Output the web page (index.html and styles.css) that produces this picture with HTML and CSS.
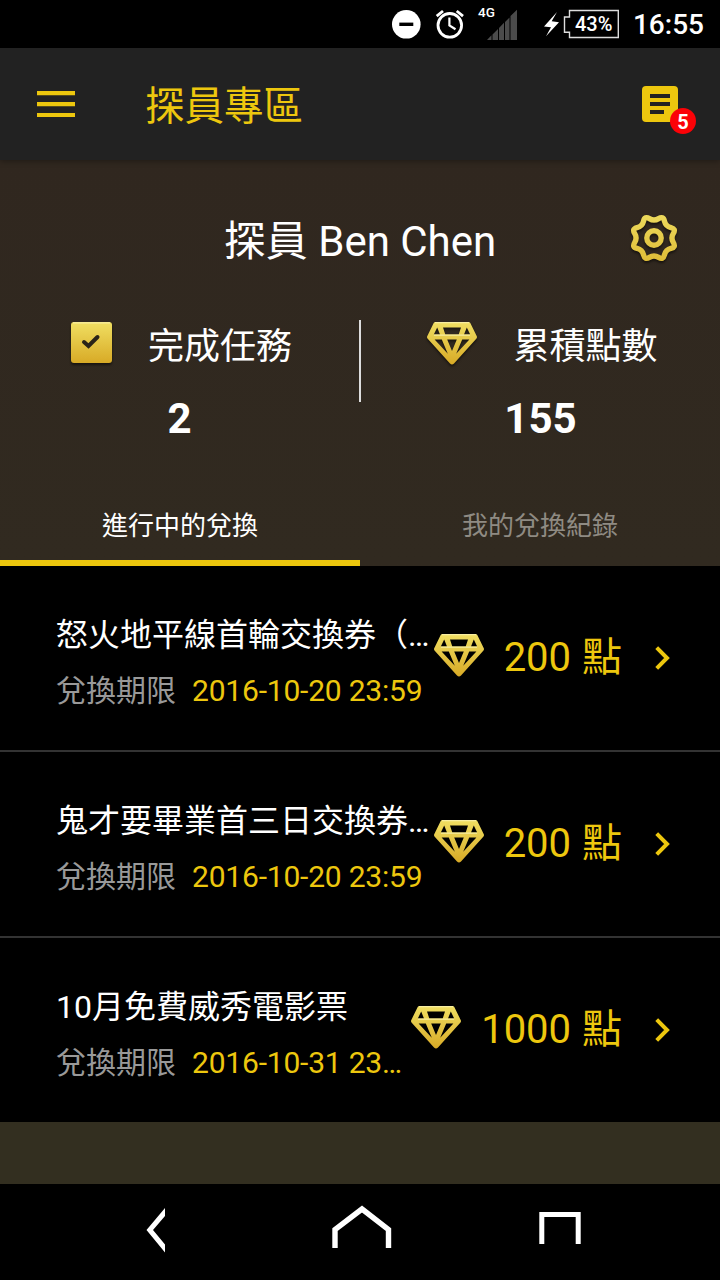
FILE: index.html
```html
<!DOCTYPE html>
<html lang="zh-Hant">
<head>
<meta charset="utf-8">
<title>探員專區</title>
<link rel="stylesheet" href="styles.css">
</head>
<body>
<svg class="defs" width="0" height="0" aria-hidden="true">
  <defs>
    <linearGradient id="gold" x1="0" y1="0" x2="0" y2="1">
      <stop offset="0" stop-color="#f0df62"/>
      <stop offset="1" stop-color="#d8aa26"/>
    </linearGradient>
    <linearGradient id="gear-gold" gradientUnits="userSpaceOnUse" x1="0" y1="-23" x2="0" y2="23">
      <stop offset="0" stop-color="#ecd95c"/>
      <stop offset="1" stop-color="#dfbd38"/>
    </linearGradient>
    <symbol id="gem" viewBox="0 0 50 43">
      <path fill="url(#gold)" fill-rule="evenodd" d="M8.4 0H41.6Q42.8 0 43.3 1L49.8 14.2Q50.3 15.4 49.5 16.5L27 41.6Q25 43.6 23 41.6L.5 16.5Q-.3 15.4 .2 14.2L6.7 1Q7.2 0 8.4 0ZM16 5.5L18.3 12.5H31.7L34 5.5ZM10.2 5.5L6.8 12.5H13ZM39.8 5.5L43.2 12.5H37ZM20.2 17.6L25 29L29.8 17.6ZM7.6 17.6L20.8 31.8L14.8 17.6ZM42.4 17.6L29.2 31.8L35.2 17.6Z"/>
      <path class="shine" d="M8 .7H42M7 13.2H43"/>
    </symbol>
  </defs>
</svg>
<div class="screen">
  <div class="status">
    <svg class="status-icons" width="230" height="48" viewBox="0 0 230 48">
      <circle cx="16.3" cy="24.3" r="14.3" fill="#fff"/>
      <path d="M9.3 24.3H23.3" stroke="#000" stroke-width="3.4"/>
      <g fill="none" stroke="#fff">
        <circle cx="59.8" cy="25.3" r="11.8" stroke-width="2.8"/>
        <path d="M59.4 17.5V25.5L65.5 29.2" stroke-width="2.2"/>
        <path d="M46.7 16.2L53 11M66.7 11L73 16.2" stroke-width="2.8"/>
      </g>
      <path d="M97 40L101.5 35.3V40ZM102.500 34.500L108 29V40H102.500ZM109 28L114 22.7V40H109ZM115 22L119.500 17.5V40H115ZM120.5 16L127 9.7V40H120.5Z" fill="#4b4b4b"/>
      <path d="M167 12L154 26.5L161 27.2L156 36.3L169 22.2L161.7 21.3Z" fill="#fff"/>
      <path d="M179.5 10.5H228.3V37.5H179.5V32.3H174.5V17H179.5Z" fill="none" stroke="#ddd" stroke-width="1.4"/>
    </svg>
    <span class="net">4G</span>
    <span class="battery">43%</span>
    <span class="clock">16:55</span>
  </div>

  <header class="bar">
    <svg class="menu" width="38" height="26" viewBox="0 0 38 26"><path d="M0 2.2H38M0 13.1H38M0 24H38" stroke="#edc70e" stroke-width="4.2"/></svg>
    <h1 class="bar-title">探員專區</h1>
    <div class="notes">
      <svg width="36" height="36" viewBox="0 0 36 36"><rect width="36" height="36" rx="4" fill="#edc70e"/><path d="M8 10H28M8 18H28M8 26H22" stroke="#222" stroke-width="4"/></svg>
      <span class="badge">5</span>
    </div>
  </header>

  <section class="profile">
    <div class="who">
      <h2 class="name">探員 Ben Chen</h2>
      <svg class="gear" width="48" height="48" viewBox="-24 -24 48 48">
        <g fill="none" stroke="url(#gear-gold)" stroke-width="5.4">
          <path d="M19.35-4.6Q16.5 0 19.35 4.6T16.95 10.45Q11.7 11.7 10.45 16.95Q9.2 22.2 4.6 19.35Q0 16.5-4.6 19.35Q-9.2 22.2-10.45 16.95Q-11.7 11.7-16.95 10.45Q-22.2 9.2-19.35 4.6Q-16.5 0-19.35-4.6Q-22.2-9.2-16.95-10.45Q-11.7-11.7-10.45-16.95Q-9.2-22.2-4.6-19.35Q0-16.5 4.6-19.35Q9.2-22.2 10.45-16.95Q11.7-11.7 16.95-10.45Q22.2-9.2 19.35-4.6Z"/>
          <circle r="7.2"/>
        </g>
      </svg>
    </div>
    <div class="stats">
      <div class="stat">
        <div class="stat-head">
          <svg class="done" width="41" height="41" viewBox="0 0 41 41"><rect width="41" height="41" rx="3" fill="url(#gold)"/><path class="shine" d="M2 .8H39"/><path d="M13 20L17.5 24L26.5 15" fill="none" stroke="#2a2418" stroke-width="4" stroke-linecap="round"/></svg>
          <span>完成任務</span>
        </div>
        <strong class="count">2</strong>
      </div>
      <div class="divider"></div>
      <div class="stat points">
        <div class="stat-head">
          <svg class="gem" width="50" height="43"><use href="#gem"/></svg>
          <span>累積點數</span>
        </div>
        <strong class="count">155</strong>
      </div>
    </div>
    <nav class="tabs">
      <span class="tab active">進行中的兌換</span>
      <span class="tab">我的兌換紀錄</span>
    </nav>
  </section>

  <main class="list">
    <article class="row">
      <div class="info">
        <div class="title">怒火地平線首輪交換券（…</div>
        <div class="limit"><span class="label">兌換期限</span><span class="date">2016-10-20 23:59</span></div>
      </div>
      <svg class="gem" width="50" height="43"><use href="#gem"/></svg>
      <span class="price">200 點</span>
      <svg class="chevron" width="16" height="24" viewBox="0 0 16 24"><path d="M1.7 1.7L12 12L1.7 22.3"/></svg>
    </article>
    <article class="row">
      <div class="info">
        <div class="title">鬼才要畢業首三日交換券…</div>
        <div class="limit"><span class="label">兌換期限</span><span class="date">2016-10-20 23:59</span></div>
      </div>
      <svg class="gem" width="50" height="43"><use href="#gem"/></svg>
      <span class="price">200 點</span>
      <svg class="chevron" width="16" height="24" viewBox="0 0 16 24"><path d="M1.7 1.7L12 12L1.7 22.3"/></svg>
    </article>
    <article class="row">
      <div class="info">
        <div class="title">10月免費威秀電影票</div>
        <div class="limit"><span class="label">兌換期限</span><span class="date">2016-10-31 23…</span></div>
      </div>
      <svg class="gem" width="50" height="43"><use href="#gem"/></svg>
      <span class="price">1000 點</span>
      <svg class="chevron" width="16" height="24" viewBox="0 0 16 24"><path d="M1.7 1.7L12 12L1.7 22.3"/></svg>
    </article>
  </main>

  <footer class="navbar">
    <svg width="720" height="96" viewBox="0 0 720 96">
      <g fill="none" stroke="#fff">
        <path d="M335 64V45.500L362 25L388.500 45.500V64" stroke-width="5.400"/>
        <path d="M541.800 60V30.500H578.200V60" stroke-width="5"/>
      </g>
      <path d="M165 24V32L153 46L165 60.500V68.500L146.500 46Z" fill="#fff"/>
    </svg>
  </footer>
</div>
</body>
</html>
```

FILE: styles.css
```css
* { box-sizing: border-box; }
body {
  margin: 0;
  background: #000;
  font-family: Roboto, "Noto Sans CJK TC", sans-serif;
  color: #fff;
}
svg { display: block; flex: none; }
h1, h2 { margin: 0; font-weight: 400; }
.defs { position: absolute; }
.shine { fill: none; stroke: #f8eea0; stroke-width: 1.2; }

.screen {
  width: 720px;
  height: 1280px;
  display: flex;
  flex-direction: column;
  overflow: hidden;
  background: linear-gradient(#30271f 160px, #312a20 560px, #332f20 1120px);
}

.status {
  position: relative;
  flex: none;
  height: 48px;
  padding-right: 16px;
  background: #000;
  display: flex;
  justify-content: flex-end;
  align-items: center;
}
.status-icons { position: absolute; left: 390px; top: 0; }
.net {
  position: absolute;
  left: 478px;
  top: 4px;
  font-size: 13.5px;
  line-height: 16px;
  font-weight: 500;
}
.battery {
  position: absolute;
  left: 575px;
  top: 12px;
  font-size: 20px;
  line-height: 24px;
  font-weight: 500;
}
.clock { font-size: 28px; line-height: 48px; font-weight: 500; padding-top: 2px; }

.bar {
  position: relative;
  flex: none;
  height: 112px;
  padding: 0 42px 0 37px;
  background: #222;
  box-shadow: 0 1px 6px rgba(0, 0, 0, .35);
  display: flex;
  align-items: center;
}
.menu { margin-top: -1px; }
.bar-title { margin-left: 70px; padding-top: 5px; flex: 1; font-size: 39.5px; line-height: 56px; color: #edc70e; }
.notes { position: relative; }
.badge {
  position: absolute;
  left: 28px;
  top: 22px;
  width: 26px;
  height: 26px;
  border-radius: 50%;
  background: #fb0207;
  font-size: 20px;
  line-height: 29px;
  font-weight: 700;
  text-align: center;
}

.profile { flex: none; height: 406px; display: flex; flex-direction: column; }
.who {
  display: grid;
  grid-template-columns: 90px 1fr 90px;
  align-items: center;
  height: 160px;
}
.name { grid-column: 2; text-align: center; padding-top: 4px; font-size: 42px; line-height: 60px; }
.gear { margin-top: -4px; filter: drop-shadow(0 2px 1px rgba(0, 0, 0, .5)); }

.stats { display: flex; height: 164px; }
.stat { flex: 1; display: flex; flex-direction: column; align-items: center; }
.stat-head {
  display: flex;
  align-items: center;
  gap: 36px;
  height: 50px;
  padding-left: 4px;
  font-size: 36px;
  line-height: 50px;
}
.stat-head span { padding-top: 4px; }
.stat-head svg { filter: drop-shadow(0 2px 1px rgba(0, 0, 0, .5)); }
.stat-head .gem { margin-top: -4px; }
.stat-head .done { margin-top: -6px; }
.divider { width: 2px; height: 82px; background: #ddd; }
.count { font-size: 42px; line-height: 50px; font-weight: 700; margin-top: 24px; }

.tabs { display: flex; height: 82px; }
.tab {
  flex: 1;
  padding-top: 22px;
  border-bottom: 6px solid transparent;
  text-align: center;
  font-size: 26px;
  line-height: 40px;
  color: #8f8b83;
}
.tab.active { color: #fff; border-color: #edc70e; }

.list { flex: none; background: #000; }
.row {
  display: flex;
  align-items: center;
  height: 186px;
  padding: 0 49px 0 56px;
  border-bottom: 2px solid #333;
}
.row:last-child { height: 184px; border-bottom: 0; }
.info { flex: 1; min-width: 0; padding-top: 8px; white-space: nowrap; }
.title { font-size: 32px; line-height: 56px; }
.limit { display: flex; gap: 16px; font-size: 30px; line-height: 55px; }
.label { flex: none; color: #999; }
.date { color: #edc70e; letter-spacing: -.2px; }
.row .gem { margin: -5px 20px 0 0; }
.price { flex: none; font-size: 40px; line-height: 56px; color: #edc70e; white-space: nowrap; word-spacing: 1px; }
.chevron { margin: -1px 0 0 33px; fill: none; stroke: #edc70e; stroke-width: 4; }

.navbar { margin-top: auto; height: 96px; background: #000; }
```
